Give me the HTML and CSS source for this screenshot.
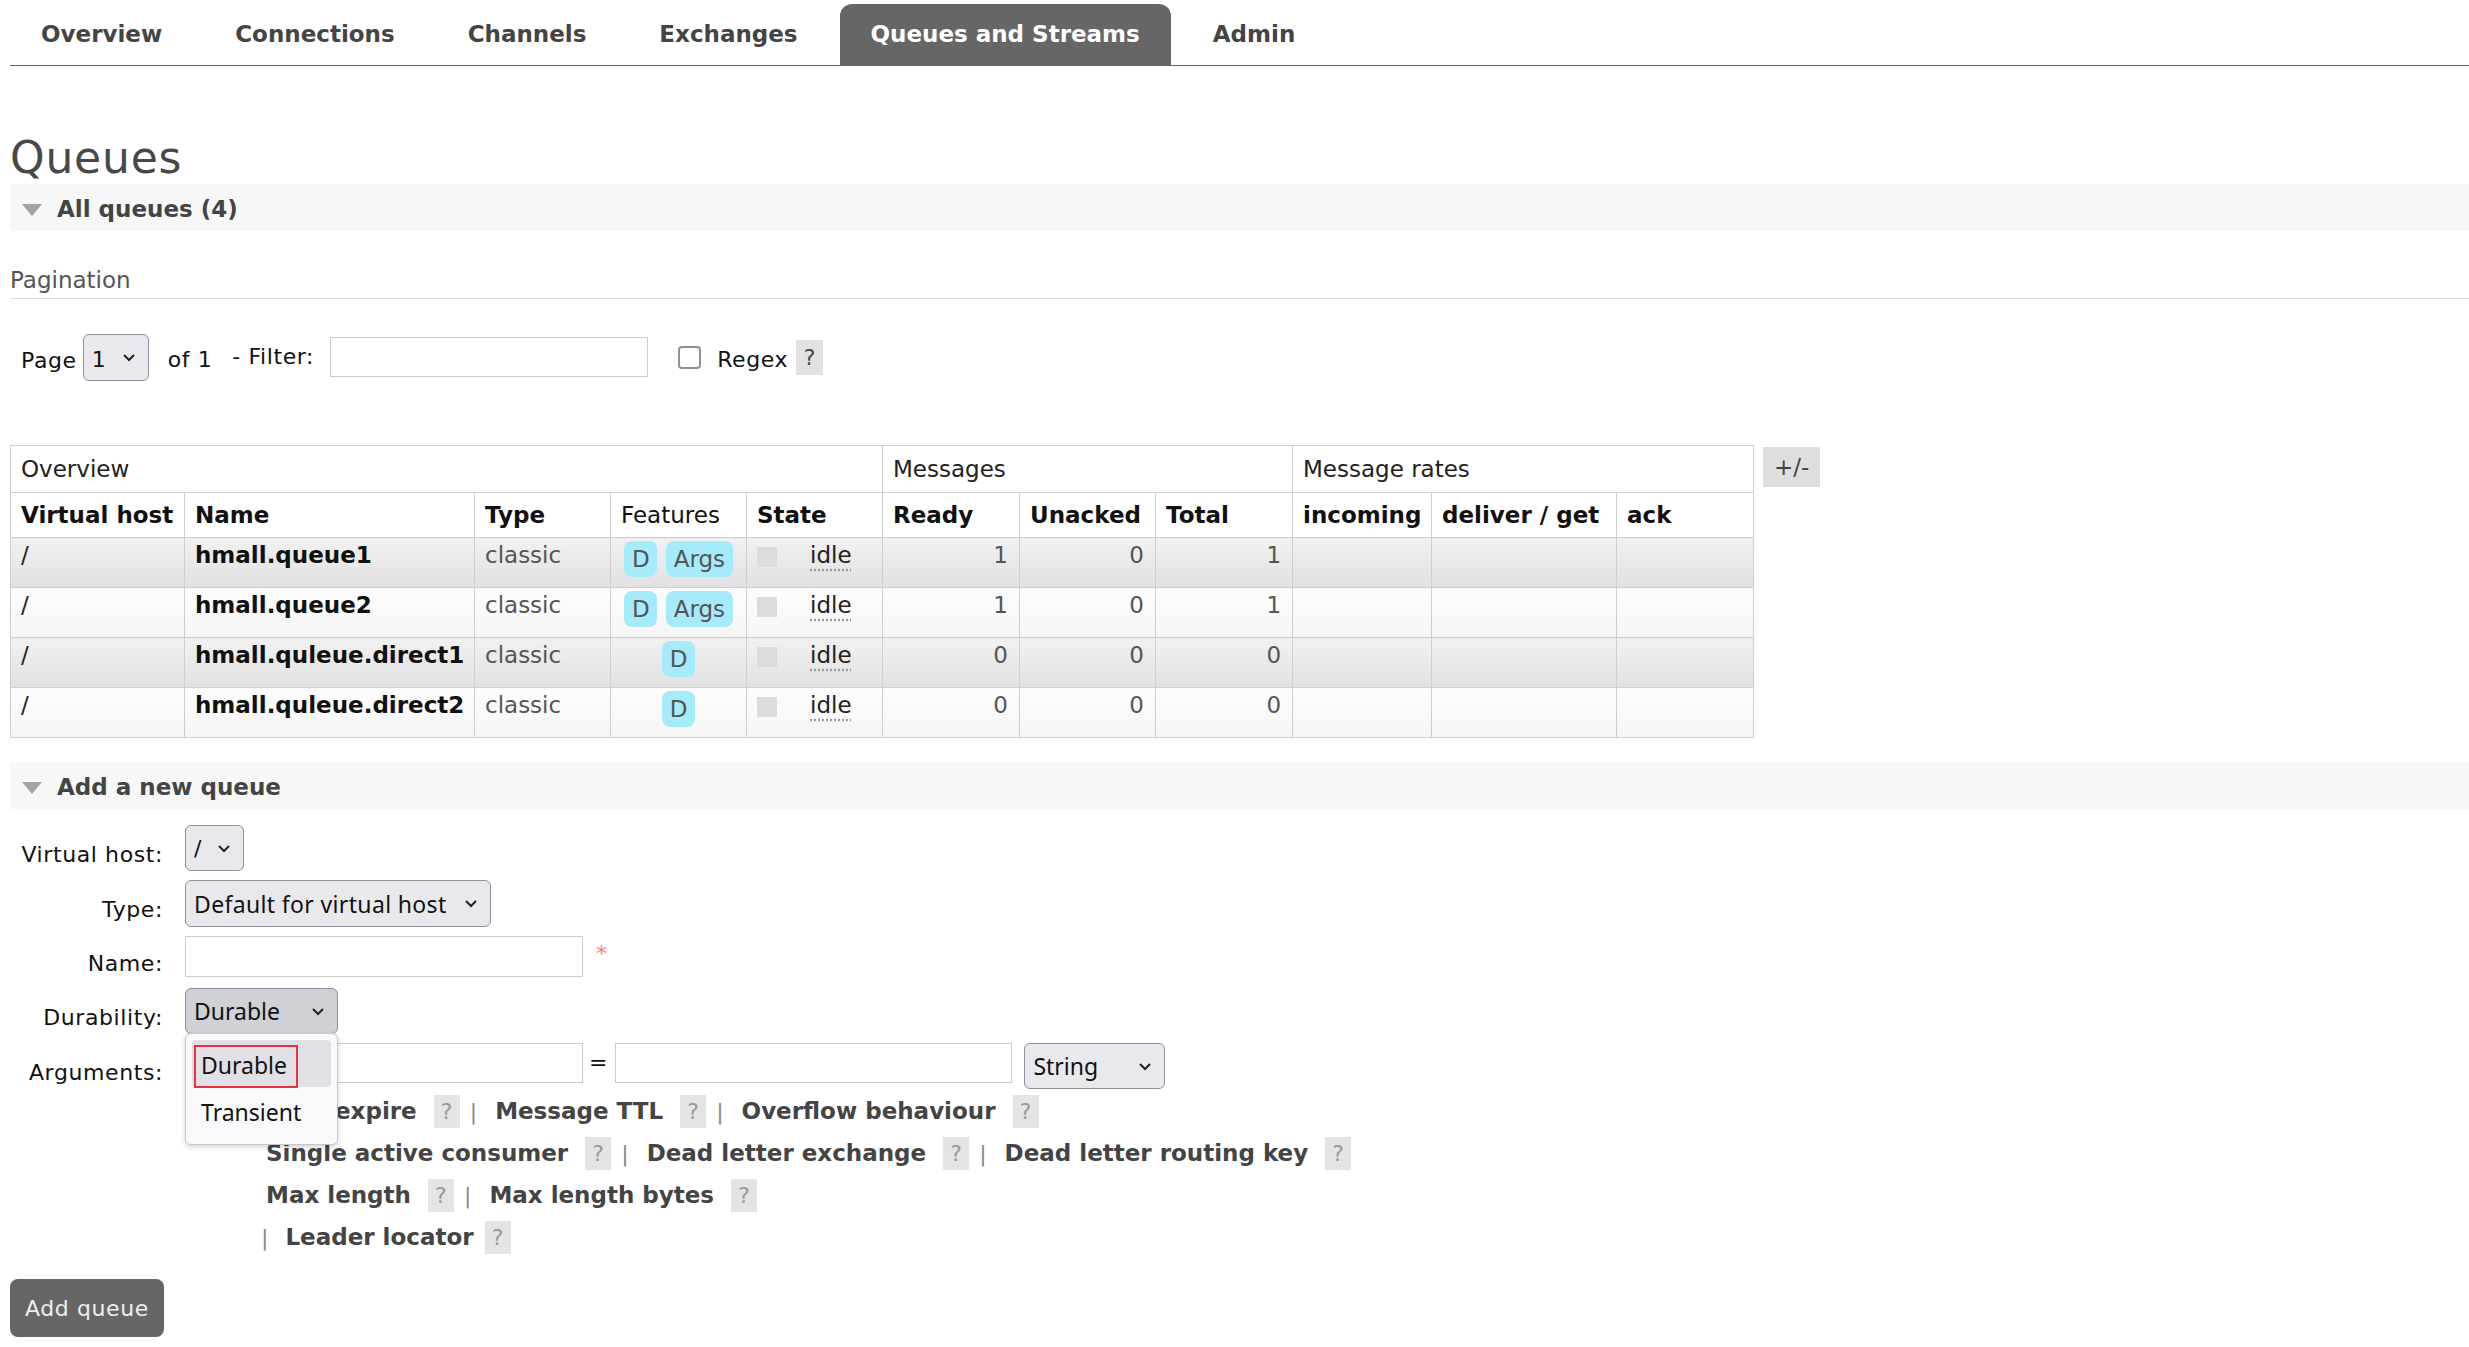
FILE: index.html
```html
<!DOCTYPE html>
<html>
<head>
<meta charset="utf-8">
<title>Queues</title>
<link rel="stylesheet" href="styles.css">
</head>
<body>
<div class="page">
  <nav class="tabs">
    <a class="tab">Overview</a>
    <a class="tab">Connections</a>
    <a class="tab">Channels</a>
    <a class="tab">Exchanges</a>
    <a class="tab active">Queues and Streams</a>
    <a class="tab">Admin</a>
  </nav>

  <h1 class="title">Queues</h1>
  <div class="section-bar"><span class="tri"></span><span>All queues (4)</span></div>

  <h3 class="pag-title">Pagination</h3>
  <div class="pager">
    <span class="pg-page">Page</span>
    <span class="select sel-page"><span class="sel-v">1</span><svg class="chev" width="14" height="9" viewBox="0 0 14 9"><path d="M2 2 L7 7 L12 2" fill="none" stroke="#222" stroke-width="2"/></svg></span>
    <span class="pg-of">of 1</span>
    <span class="pg-filter">- Filter:</span>
    <span class="input filter-input"></span>
    <span class="checkbox"></span>
    <span class="pg-regex">Regex</span>
    <span class="help-box">?</span>
  </div>

  <div class="table-wrap">
    <table class="list">
      <colgroup>
        <col class="c-vhost"><col class="c-name"><col class="c-type"><col class="c-feat"><col class="c-state">
        <col class="c-ready"><col class="c-unack"><col class="c-total">
        <col class="c-in"><col class="c-del"><col class="c-ack">
      </colgroup>
      <thead>
        <tr class="group">
          <th colspan="5">Overview</th>
          <th colspan="3">Messages</th>
          <th colspan="3">Message rates</th>
        </tr>
        <tr class="heads">
          <th class="b">Virtual host</th>
          <th class="b">Name</th>
          <th class="b">Type</th>
          <th>Features</th>
          <th class="b">State</th>
          <th class="b">Ready</th>
          <th class="b">Unacked</th>
          <th class="b">Total</th>
          <th class="b">incoming</th>
          <th class="b">deliver / get</th>
          <th class="b">ack</th>
        </tr>
      </thead>
      <tbody>
        <tr class="alt1">
          <td>/</td>
          <td class="qname">hmall.queue1</td>
          <td class="muted">classic</td>
          <td class="feat"><div class="badges"><span class="badge">D</span><span class="badge">Args</span></div></td>
          <td class="state"><span class="sq"></span><span class="idle">idle</span></td>
          <td class="num">1</td><td class="num">0</td><td class="num">1</td>
          <td></td><td></td><td></td>
        </tr>
        <tr class="alt2">
          <td>/</td>
          <td class="qname">hmall.queue2</td>
          <td class="muted">classic</td>
          <td class="feat"><div class="badges"><span class="badge">D</span><span class="badge">Args</span></div></td>
          <td class="state"><span class="sq"></span><span class="idle">idle</span></td>
          <td class="num">1</td><td class="num">0</td><td class="num">1</td>
          <td></td><td></td><td></td>
        </tr>
        <tr class="alt1">
          <td>/</td>
          <td class="qname">hmall.quleue.direct1</td>
          <td class="muted">classic</td>
          <td class="feat"><div class="badges"><span class="badge">D</span></div></td>
          <td class="state"><span class="sq"></span><span class="idle">idle</span></td>
          <td class="num">0</td><td class="num">0</td><td class="num">0</td>
          <td></td><td></td><td></td>
        </tr>
        <tr class="alt2">
          <td>/</td>
          <td class="qname">hmall.quleue.direct2</td>
          <td class="muted">classic</td>
          <td class="feat"><div class="badges"><span class="badge">D</span></div></td>
          <td class="state"><span class="sq"></span><span class="idle">idle</span></td>
          <td class="num">0</td><td class="num">0</td><td class="num">0</td>
          <td></td><td></td><td></td>
        </tr>
      </tbody>
    </table>
    <span class="plusminus">+/-</span>
  </div>

  <div class="section-bar add-bar"><span class="tri"></span><span>Add a new queue</span></div>

  <div class="form">
    <div class="frow r1">
      <label class="flabel">Virtual host:</label>
      <span class="select sel-vhost"><span class="sel-v">/</span><svg class="chev" width="14" height="9" viewBox="0 0 14 9"><path d="M2 2 L7 7 L12 2" fill="none" stroke="#222" stroke-width="2"/></svg></span>
    </div>
    <div class="frow r2">
      <label class="flabel">Type:</label>
      <span class="select sys sel-type"><span class="sel-v">Default for virtual host</span><svg class="chev" width="14" height="9" viewBox="0 0 14 9"><path d="M2 2 L7 7 L12 2" fill="none" stroke="#222" stroke-width="2"/></svg></span>
    </div>
    <div class="frow r3">
      <label class="flabel lname">Name:</label>
      <span class="input name-input"></span>
      <span class="req">*</span>
    </div>
    <div class="frow r4">
      <label class="flabel">Durability:</label>
      <span class="dur-wrap">
        <span class="select sys sel-dur"><span class="sel-v">Durable</span><svg class="chev" width="14" height="9" viewBox="0 0 14 9"><path d="M2 2 L7 7 L12 2" fill="none" stroke="#222" stroke-width="2"/></svg></span>
        <span class="popup">
          <span class="opt opt-on">Durable</span>
          <span class="opt">Transient</span>
          <span class="focus-ring"></span>
        </span>
      </span>
    </div>
    <div class="frow r5">
      <label class="flabel">Arguments:</label>
      <span class="input arg-key"></span>
      <span class="eq">=</span>
      <span class="input arg-val"></span>
      <span class="select sys sel-str"><span class="sel-v">String</span><svg class="chev" width="14" height="9" viewBox="0 0 14 9"><path d="M2 2 L7 7 L12 2" fill="none" stroke="#222" stroke-width="2"/></svg></span>
    </div>

    <div class="helps">
      <div class="hrow">
        <span class="arg">Auto expire</span><span class="hq">?</span><span class="sep">|</span>
        <span class="arg">Message TTL</span><span class="hq">?</span><span class="sep">|</span>
        <span class="arg">Overflow behaviour</span><span class="hq">?</span>
      </div>
      <div class="hrow">
        <span class="arg">Single active consumer</span><span class="hq">?</span><span class="sep">|</span>
        <span class="arg">Dead letter exchange</span><span class="hq">?</span><span class="sep">|</span>
        <span class="arg">Dead letter routing key</span><span class="hq">?</span>
      </div>
      <div class="hrow">
        <span class="arg">Max length</span><span class="hq">?</span><span class="sep">|</span>
        <span class="arg">Max length bytes</span><span class="hq">?</span>
      </div>
      <div class="hrow lead">
        <span class="sep first">|</span>
        <span class="arg">Leader locator</span><span class="hq tight">?</span>
      </div>
    </div>
  </div>

  <button class="add-btn">Add queue</button>
</div>
</body>
</html>
```

FILE: styles.css
```css
html, body {
  margin: 0;
  padding: 0;
  background: #fff;
}

body {
  font-family: "DejaVu Sans", Verdana, sans-serif;
  font-size: 22px;
  color: #222;
}

.page {
  padding-left: 10px;
}

/* ---------- tabs ---------- */
.tabs {
  display: flex;
  padding-top: 4px;
  height: 61px;
  border-bottom: 1px solid #666;
}

.tab {
  display: block;
  padding: 0 31px;
  margin-right: 11px;
  line-height: 61px;
  font-weight: bold;
  font-size: 23px;
  color: #444;
  white-space: nowrap;
}

.tab.active {
  background: #666;
  color: #fff;
  border-radius: 12px 12px 0 0;
}

/* ---------- headings ---------- */
.title {
  margin: 67px 0 1px;
  font-size: 44px;
  line-height: 50px;
  letter-spacing: 0.8px;
  font-weight: normal;
  color: #484848;
}

.section-bar {
  display: flex;
  align-items: center;
  height: 43px;
  padding-top: 4px;
  padding-left: 12px;
  background: #f7f7f7;
  font-weight: bold;
  font-size: 23px;
  line-height: 27px;
  color: #444;
}

.tri {
  width: 0;
  height: 0;
  border-left: 10.5px solid transparent;
  border-right: 10.5px solid transparent;
  border-top: 12px solid #a3a3a3;
  margin-right: 15px;
}

.pag-title {
  margin: 36px 0 0;
  font-size: 23px;
  line-height: 27px;
  font-weight: normal;
  color: #555;
  padding-bottom: 4px;
  border-bottom: 1px solid #ddd;
}

/* ---------- pager ---------- */
.pager {
  display: flex;
  align-items: flex-start;
  margin-top: 35px;
  height: 47px;
  line-height: 27px;
  letter-spacing: 0.6px;
  color: #111;
}

.pg-page {
  margin-left: 11px;
  margin-top: 13px;
}

.select {
  display: flex;
  align-items: center;
  justify-content: space-between;
  box-sizing: border-box;
  background: #e9e9ed;
  border: 1px solid #8f8f9d;
  border-radius: 6px;
  padding: 0 12px 0 8px;
  color: #111;
  white-space: nowrap;
  letter-spacing: 0;
}

.select.sys {
  font-family: "Noto Sans", "Open Sans", sans-serif;
  font-size: 23px;
}

.chev {
  flex: none;
}

.sel-page {
  width: 66px;
  height: 47px;
  margin-left: 6px;
}

.sel-page .sel-v {
  margin-top: 4px;
}

.pg-of {
  margin-left: 19px;
  margin-top: 12px;
}

.pg-filter {
  margin-left: 20px;
  margin-top: 9px;
}

.input {
  display: block;
  box-sizing: border-box;
  border: 1px solid #ccc;
  background: #fff;
}

.filter-input {
  width: 318px;
  height: 40px;
  margin-left: 16px;
  margin-top: 3px;
}

.checkbox {
  box-sizing: border-box;
  width: 23px;
  height: 23px;
  border: 2px solid #8f8f9d;
  border-radius: 4px;
  margin-left: 30px;
  margin-top: 12px;
}

.pg-regex {
  margin-left: 16px;
  margin-top: 12px;
}

.help-box {
  width: 27px;
  height: 35px;
  line-height: 35px;
  text-align: center;
  background: #e2e2e2;
  color: #444;
  margin-left: 8px;
  margin-top: 6px;
  letter-spacing: 0;
}

/* ---------- table ---------- */
.table-wrap {
  display: flex;
  align-items: flex-start;
  margin-top: 64px;
}

.list {
  border-collapse: collapse;
  table-layout: fixed;
  width: 1743px;
  font-size: 23px;
  line-height: 27px;
}

.c-vhost { width: 174px; }
.c-name { width: 290px; }
.c-type { width: 136px; }
.c-feat { width: 136px; }
.c-state { width: 136px; }
.c-ready { width: 137px; }
.c-unack { width: 136px; }
.c-total { width: 137px; }
.c-in { width: 139px; }
.c-del { width: 185px; }
.c-ack { width: 137px; }

.list th,
.list td {
  border: 1px solid #cfcfcf;
  text-align: left;
  vertical-align: top;
  white-space: nowrap;
  overflow: visible;
}

.list tr.group th {
  font-weight: normal;
  padding: 10px 10px 9px;
  color: #222;
  background: #fff;
}

.list tr.heads th {
  font-weight: normal;
  padding: 9px 10px 8px;
  color: #111;
  background: #fff;
}

.list tr.heads th.b {
  font-weight: bold;
}

.list td {
  padding: 4px 10px 9px;
  height: 36px;
  color: #222;
}

.list tr.alt1 td {
  background: linear-gradient(#f1f1f1, #e1e1e1);
}

.list tr.alt2 td {
  background: linear-gradient(#fdfdfd, #f5f5f5);
}

.list td.qname {
  font-weight: bold;
  color: #111;
}

.list td.muted {
  color: #555;
}

.list td.num {
  text-align: right;
  padding-right: 11px;
  color: #555;
}

.list td.feat {
  padding-left: 0;
  padding-right: 0;
  padding-top: 3px;
}

.badges {
  display: flex;
  justify-content: center;
  gap: 9px;
}

.badge {
  display: block;
  height: 36px;
  line-height: 36px;
  padding: 0 7.5px;
  border-radius: 8px;
  background: #a6ebfb;
  color: #555;
}

.state {
  color: #555;
}

.sq {
  display: inline-block;
  width: 20px;
  height: 20px;
  background: #dcdcdc;
  vertical-align: top;
  margin-top: 5px;
  margin-right: 33px;
}

.idle {
  text-decoration: underline dotted #999;
  text-underline-offset: 6px;
}

.plusminus {
  display: block;
  height: 40px;
  line-height: 40px;
  padding: 0 11px;
  margin-left: 9px;
  margin-top: 2px;
  background: #dedede;
  font-size: 23px;
  color: #444;
}

/* ---------- add queue ---------- */
.add-bar {
  margin-top: 24px;
}

.form {
  margin-top: 16px;
  color: #111;
}

.frow {
  display: flex;
  align-items: flex-start;
}

.flabel {
  width: 153px;
  flex: none;
  text-align: right;
  padding-top: 16px;
  margin-right: 22px;
  line-height: 27px;
  letter-spacing: 0.6px;
  white-space: nowrap;
}

.flabel.lname {
  padding-top: 14px;
}

.r2 { margin-top: 9px; }
.r3 { margin-top: 9px; }
.r4 { margin-top: 11px; }
.r5 { margin-top: 9px; }

.sel-vhost {
  width: 59px;
  height: 46px;
  font-size: 22px;
}

.sel-type {
  width: 306px;
  height: 47px;
}

.sel-type .sel-v {
  letter-spacing: 0.35px;
}

.name-input {
  width: 398px;
  height: 41px;
}

.req {
  color: #f27d7d;
  margin-left: 13px;
  margin-top: 5px;
  font-size: 22px;
}

.dur-wrap {
  position: relative;
  display: block;
}

.sel-dur {
  width: 153px;
  height: 46px;
  background: #d0d0d7;
}

.popup {
  position: absolute;
  left: 0;
  top: 45px;
  width: 153px;
  height: 112px;
  box-sizing: border-box;
  background: #f9f9fb;
  border: 1px solid #c6c6cc;
  border-radius: 6px;
  box-shadow: 0 2px 5px rgba(0, 0, 0, 0.18);
  padding: 6px 6px 0;
  z-index: 5;
  font-family: "Noto Sans", "Open Sans", sans-serif;
  font-size: 23px;
  color: #111;
}

.opt {
  display: block;
  height: 47px;
  line-height: 47px;
  padding: 2px 0 0 9px;
  box-sizing: border-box;
  border-radius: 4px;
}

.opt-on {
  background: #e0e0e6;
}

.focus-ring {
  position: absolute;
  left: 8px;
  top: 11px;
  width: 104px;
  height: 43px;
  box-sizing: border-box;
  border: 2px solid #e8333f;
}

.arg-key {
  width: 398px;
  height: 40px;
}

.eq {
  margin-left: 6px;
  margin-top: 6px;
  line-height: 27px;
}

.arg-val {
  width: 397px;
  height: 40px;
  margin-left: 8px;
}

.sel-str {
  width: 141px;
  height: 46px;
  margin-left: 12px;
}

.helps {
  margin-left: 256px;
  margin-top: 1px;
}

.hrow {
  display: flex;
  align-items: center;
  height: 42px;
  line-height: 27px;
  white-space: nowrap;
}

.arg {
  font-weight: bold;
  font-size: 23px;
  color: #444;
}

.hq {
  width: 26px;
  height: 33px;
  line-height: 33px;
  text-align: center;
  background: #e4e4e4;
  color: #9a9a9a;
  margin-left: 17px;
}

.hq.tight {
  margin-left: 11px;
}

.sep {
  color: #888;
  margin-left: 10px;
  margin-right: 18px;
}

.sep.first {
  margin-left: -5px;
  margin-right: 17px;
}

.add-btn {
  display: block;
  margin-top: 21px;
  width: 154px;
  height: 58px;
  padding: 0 0 0 15px;
  text-align: left;
  border: none;
  border-radius: 8px;
  background: #666;
  color: #eee;
  font-family: "DejaVu Sans", Verdana, sans-serif;
  font-size: 22px;
  letter-spacing: 0.6px;
}
```
